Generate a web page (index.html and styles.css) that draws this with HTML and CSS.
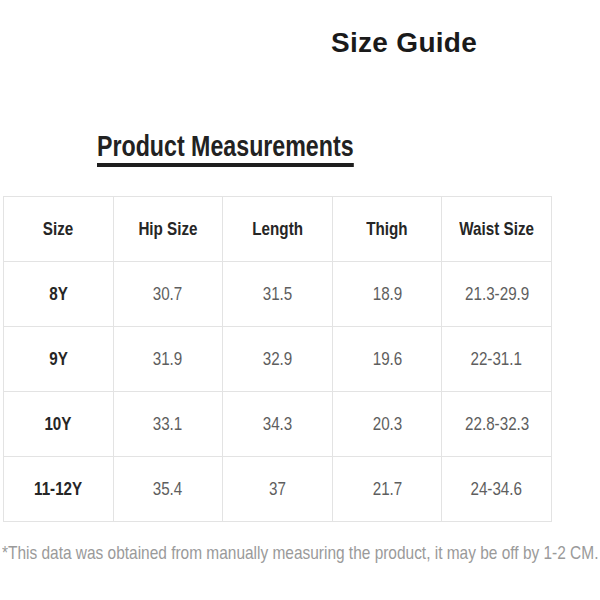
FILE: index.html
```html
<!DOCTYPE html>
<html>
<head>
<meta charset="utf-8">
<link rel="stylesheet" href="styles.css">
</head>
<body>
<div class="page">
  <h1 class="title">Size Guide</h1>
  <h2 class="subtitle"><span class="sub-text">Product Measurements</span></h2>
  <table class="sizes">
    <tr><th><span class="t">Size</span></th><th><span class="t">Hip Size</span></th><th><span class="t">Length</span></th><th><span class="t">Thigh</span></th><th><span class="t">Waist Size</span></th></tr>
    <tr><th><span class="t">8Y</span></th><td><span class="t">30.7</span></td><td><span class="t">31.5</span></td><td><span class="t">18.9</span></td><td><span class="t">21.3-29.9</span></td></tr>
    <tr><th><span class="t">9Y</span></th><td><span class="t">31.9</span></td><td><span class="t">32.9</span></td><td><span class="t">19.6</span></td><td><span class="t">22-31.1</span></td></tr>
    <tr><th><span class="t">10Y</span></th><td><span class="t">33.1</span></td><td><span class="t">34.3</span></td><td><span class="t">20.3</span></td><td><span class="t">22.8-32.3</span></td></tr>
    <tr><th><span class="t">11-12Y</span></th><td><span class="t">35.4</span></td><td><span class="t">37</span></td><td><span class="t">21.7</span></td><td><span class="t">24-34.6</span></td></tr>
  </table>
  <p class="note"><span class="note-text">*This data was obtained from manually measuring the product, it may be off by 1-2 CM.</span></p>
</div>
</body>
</html>
```
FILE: styles.css
```css
html, body { margin: 0; padding: 0; background: #fff; }
.page {
  width: 600px;
  height: 600px;
  font-family: "Liberation Sans", Arial, sans-serif;
  overflow: hidden;
}
.title {
  margin: 0;
  padding: 27px 0 0 331px;
  font-size: 28px;
  line-height: 32px;
  letter-spacing: 0.3px;
  font-weight: bold;
  color: #1a1a1a;
}
.subtitle {
  margin: 71px 0 0 97px;
  font-size: 29px;
  line-height: 32px;
  font-weight: bold;
  color: #222;
}
.sub-text {
  display: block;
  width: max-content;
  border-bottom: 4px solid #1e1e1e;
  padding-bottom: 1px;
  transform: scaleX(0.8);
  transform-origin: left top;
}
.sizes {
  margin: 29px 0 0 3px;
  border-collapse: collapse;
  table-layout: fixed;
  width: 549px;
}
.sizes tr { height: 65px; }
.sizes th, .sizes td {
  border: 1px solid #e3e3e3;
  padding: 0;
  text-align: center;
  vertical-align: middle;
  font-size: 19px;
  white-space: nowrap;
}
.sizes th { font-weight: bold; color: #262626; }
.sizes td { font-weight: normal; color: #5e5e5e; }
.t {
  display: inline-block;
  transform: scaleX(0.8);
}
.note {
  margin: 21px 0 0 2px;
  font-size: 19px;
  line-height: 20px;
  color: #9a9a9a;
}
.note-text {
  display: block;
  width: max-content;
  white-space: nowrap;
  transform: scaleX(0.813);
  transform-origin: left top;
}
```
